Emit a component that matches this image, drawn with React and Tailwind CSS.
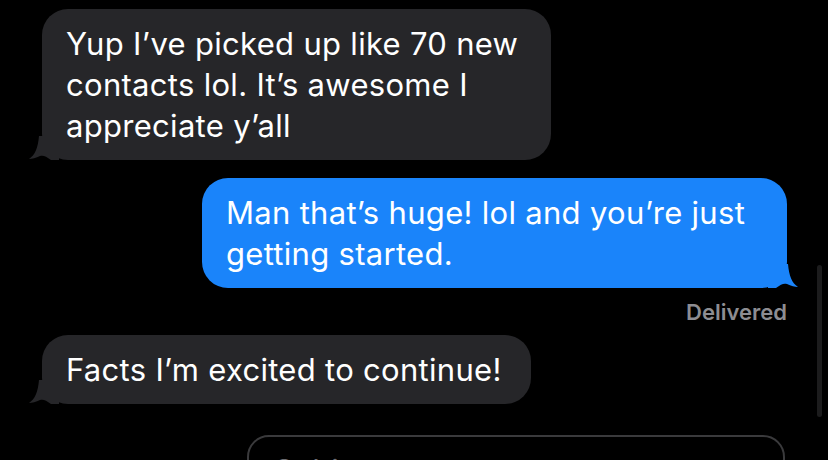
import React from "react";

// Balon kuyruğu (sol / sağ)
const Tail = ({ side, color }) => {
  if (side === "left") {
    return (
      <svg
        className="absolute bottom-0 left-[-13px]"
        width="30"
        height="24"
        viewBox="0 0 30 24"
      >
        <path
          d="M30 0 L30 24 L22 24 C17 20 14 19 11 20 C7 22 3 23 0 23 C6 19 9 12 10 0 Z"
          fill={color}
        />
      </svg>
    );
  }
  return (
    <svg
      className="absolute bottom-0 right-[-11px]"
      width="30"
      height="24"
      viewBox="0 0 30 24"
    >
      <path
        d="M0 0 L0 24 L8 24 C13 20 16 19 19 20 C23 22 27 23 30 23 C24 19 21 12 20 0 Z"
        fill={color}
      />
    </svg>
  );
};

const Bubble = ({ children, side, className }) => {
  const color = side === "left" ? "#262629" : "#1a84fa";
  return (
    <div
      className={`relative rounded-[26px] px-6 text-[31px] leading-[41px] tracking-[0.3px] text-white ${
        side === "left" ? "bg-[#262629]" : "bg-[#1a84fa]"
      } ${className}`}
    >
      {children}
      <Tail side={side} color={color} />
    </div>
  );
};

export default function App() {
  return (
    <div
      className="relative h-[460px] w-[828px] overflow-hidden bg-black"
      style={{ fontFamily: "Inter, 'Liberation Sans', sans-serif" }}
    >
      {/* kaydırma çubuğu */}
      <div className="absolute right-[6px] top-[265px] h-[152px] w-[5px] rounded-full bg-[#1c1c1d]" />

      <div className="flex flex-col pt-[9px]">
        <Bubble side="left" className="ml-[42px] w-[509px] py-[14px]">
          Yup I’ve picked up like 70 new
          <br />
          contacts lol. It’s awesome I
          <br />
          appreciate y’all
        </Bubble>

        <Bubble side="right" className="ml-[202px] mt-[18px] w-[585px] py-[14px]">
          Man that’s huge! lol and you’re just
          <br />
          getting started.
        </Bubble>

        <div className="mr-[41px] mt-[10px] text-right text-[22px] font-semibold leading-[28px] text-[#8d8d92]">
          Delivered
        </div>

        <div className="mt-[9px] flex">
          <Bubble side="left" className="ml-[42px] w-[489px] py-[14px]">
            Facts I’m excited to continue!
          </Bubble>
        </div>

        <div className="ml-[247px] mt-[31px] h-[60px] w-[538px] rounded-[22px] border-2 border-[#3a3a3c] px-[25px] pt-[16px] text-[31px] leading-[36px] text-[#6d6d72]">
          Subject
        </div>
      </div>
    </div>
  );
}
